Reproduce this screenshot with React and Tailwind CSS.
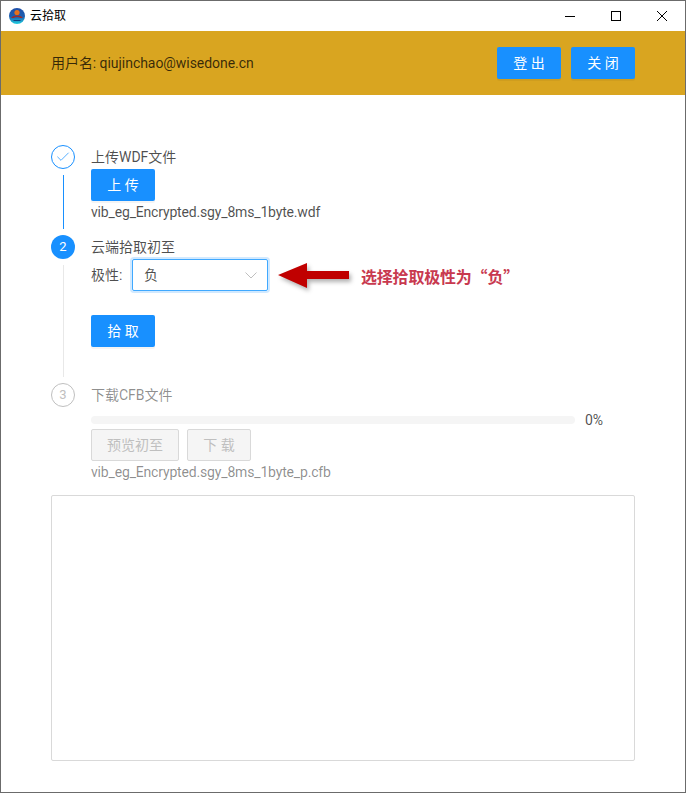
import React from "react";
import { Check } from "lucide-react";

const FONT = "font-['Roboto','Noto_Sans_CJK_SC',sans-serif]";

const Logo = () => (
  <svg width="16" height="16" viewBox="0 0 16 16">
    <defs>
      <linearGradient id="logoBg" x1="0" y1="0" x2="0" y2="1">
        <stop offset="0" stopColor="#1f4fa8" />
        <stop offset="0.55" stopColor="#1d5fb0" />
        <stop offset="1" stopColor="#1fd0e0" />
      </linearGradient>
    </defs>
    <circle cx="8" cy="8" r="8" fill="url(#logoBg)" />
    <circle cx="8" cy="4.6" r="2.6" fill="#e8701a" />
    <path d="M2 10 C5 6.8 11 6.8 14 10 L11.5 10 C9.5 8.6 6.5 8.6 4.5 10 Z" fill="#9c2b2b" />
    <path d="M4.5 12 H11.5 V13 H4.5 Z" fill="#0f3f80" />
  </svg>
);

const PrimaryButton = ({ children, className = "" }) => (
  <button className={`h-8 bg-[#1890ff] text-white text-sm rounded-[2px] shadow-[0_2px_0_rgba(0,0,0,0.045)] ${className}`}>
    {children}
  </button>
);

const DisabledButton = ({ children, className = "" }) => (
  <button className={`h-8 bg-[#f5f5f5] border border-[#d9d9d9] text-[#bfbfbf] text-sm rounded-[2px] ${className}`}>
    {children}
  </button>
);

export default function App() {
  return (
    <div className={`${FONT} relative w-[686px] h-[793px] bg-white border border-[#6b6b6b] flex flex-col text-sm overflow-hidden`}>
      {/* title bar */}
      <div className="h-[30px] flex items-center shrink-0">
        <div className="ml-2">
          <Logo />
        </div>
        <span className="ml-[5px] text-xs text-black">云拾取</span>
        <div className="ml-auto flex items-center text-black">
          <svg width="46" height="30" viewBox="0 0 46 30">
            <path d="M18 15.5 H28" stroke="#000" strokeWidth="1" />
          </svg>
          <svg width="46" height="30" viewBox="0 0 46 30">
            <rect x="18.5" y="10.5" width="9" height="9" fill="none" stroke="#000" strokeWidth="1" />
          </svg>
          <svg width="46" height="30" viewBox="0 0 46 30">
            <path d="M18 10 L28 20 M28 10 L18 20" stroke="#000" strokeWidth="1" />
          </svg>
        </div>
      </div>

      {/* header */}
      <div className="h-16 bg-[#d9a520] flex items-center justify-between pl-[50px] pr-[50px] shrink-0">
        <span className="text-black/75 tracking-[-0.05px]">用户名: qiujinchao@wisedone.cn</span>
        <div className="flex gap-2.5">
          <PrimaryButton className="w-16">登 出</PrimaryButton>
          <PrimaryButton className="w-16">关 闭</PrimaryButton>
        </div>
      </div>

      {/* steps */}
      <div className="pl-[50px] pr-[50px] pt-[50px] flex flex-col">
        <div className="flex h-[90px]">
          <div className="w-6 flex flex-col items-center shrink-0">
            <div className="w-6 h-6 rounded-full border border-[#1890ff] flex items-center justify-center shrink-0">
              <Check size={16} strokeWidth={1.1} className="text-[#1890ff]" />
            </div>
            <div className="w-px flex-1 bg-[#1890ff] mt-1.5 mb-1.5" />
          </div>
          <div className="ml-4 flex flex-col items-start">
            <div className="h-6 flex items-center text-black/70">上传WDF文件</div>
            <PrimaryButton className="w-16">上 传</PrimaryButton>
            <div className="h-[22px] flex items-center text-black/70 tracking-[-0.17px]">vib_eg_Encrypted.sgy_8ms_1byte.wdf</div>
          </div>
        </div>

        <div className="flex h-[148px]">
          <div className="w-6 flex flex-col items-center shrink-0">
            <div className="w-6 h-6 rounded-full bg-[#1890ff] text-white text-[13px] flex items-center justify-center shrink-0">2</div>
            <div className="w-px flex-1 bg-[#e8e8e8] mt-1.5 mb-1.5" />
          </div>
          <div className="ml-4 flex flex-col items-start">
            <div className="h-6 flex items-center text-black/70">云端拾取初至</div>
            <div className="flex items-center h-8">
              <span className="text-black/70 w-[41px]">极性:</span>
              <div className="w-[136px] h-8 border border-[#40a9ff] rounded-[2px] shadow-[0_0_0_2px_rgba(24,144,255,0.2)] flex items-center justify-between pl-[11px] pr-[10px]">
                <span className="text-black/70">负</span>
                <svg width="12" height="7" viewBox="0 0 12 7">
                  <path d="M0.5 0.5 L6 6 L11.5 0.5" fill="none" stroke="#bfbfbf" strokeWidth="1" />
                </svg>
              </div>
            </div>
            <PrimaryButton className="w-16 mt-6">拾 取</PrimaryButton>
          </div>
        </div>

        <div className="flex">
          <div className="w-6 shrink-0">
            <div className="w-6 h-6 rounded-full border border-[#bfbfbf] text-[#bfbfbf] text-[13px] flex items-center justify-center">3</div>
          </div>
          <div className="ml-4 flex flex-col items-start flex-1">
            <div className="h-6 flex items-center text-black/45">下载CFB文件</div>
            <div className="flex items-center h-[22px] mt-0.5 w-full -mb-0.5">
              <div className="w-[484px] h-2 rounded-full bg-[#f5f5f5]" />
              <span className="ml-2.5 text-black/70">0%</span>
            </div>
            <div className="flex gap-2">
              <DisabledButton className="w-[88px]">预览初至</DisabledButton>
              <DisabledButton className="w-16">下 载</DisabledButton>
            </div>
            <div className="h-[22px] flex items-center text-black/45 tracking-[-0.17px]">vib_eg_Encrypted.sgy_8ms_1byte_p.cfb</div>
          </div>
        </div>

        <div className="mt-3 h-[266px] border border-[#d9d9d9] rounded-[2px]" />
      </div>

      {/* annotation on top of the screenshot */}
      <div className="absolute left-[277px] top-[262px] flex items-center">
        <svg width="72" height="26" viewBox="0 0 72 26" className="drop-shadow-[2px_3px_2px_rgba(0,0,0,0.3)]">
          <path d="M0 12 L29 0 L29 8 L71 8 L71 16 L29 16 L29 25 Z" fill="#c00000" />
        </svg>
        <span className="ml-[11px] text-base tracking-[-0.2px] font-bold text-[#c8394f] font-['Noto_Sans_CJK_SC',sans-serif]">选择拾取极性为“负”</span>
      </div>
    </div>
  );
}
